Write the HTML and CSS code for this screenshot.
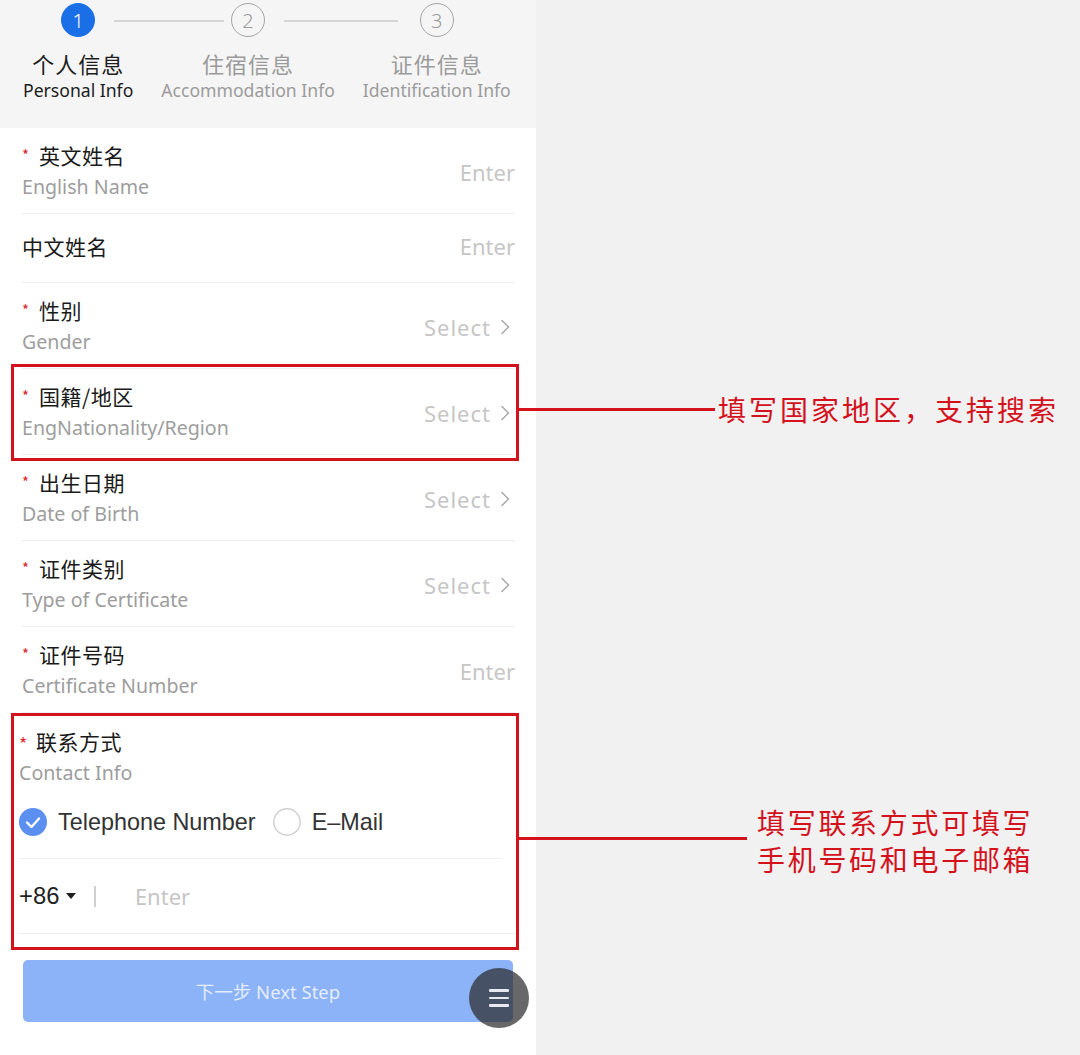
FILE: index.html
```html
<!DOCTYPE html>
<html lang="zh-CN">
<head>
<meta charset="utf-8">
<title>个人信息</title>
<link rel="stylesheet" href="styles.css">
</head>
<body>
<div class="canvas">
  <main class="phone">
    <header class="steps">
      <div class="step active">
        <span class="dot">1</span>
        <span class="step-zh">个人信息</span>
        <span class="step-en">Personal Info</span>
      </div>
      <div class="step">
        <span class="dot">2</span>
        <span class="step-zh">住宿信息</span>
        <span class="step-en">Accommodation Info</span>
      </div>
      <div class="step">
        <span class="dot">3</span>
        <span class="step-zh">证件信息</span>
        <span class="step-en">Identification Info</span>
      </div>
    </header>

    <section class="form">
      <div class="row">
        <div class="label"><div class="zh"><i class="req">*</i>英文姓名</div><div class="en">English Name</div></div>
        <span class="ph">Enter</span>
      </div>
      <div class="row single">
        <div class="label"><div class="zh">中文姓名</div></div>
        <span class="ph">Enter</span>
      </div>
      <div class="row">
        <div class="label"><div class="zh"><i class="req">*</i>性别</div><div class="en">Gender</div></div>
        <span class="ph sel">Select<svg class="chev" viewBox="0 0 10 16" width="10" height="16"><polyline points="2,1.5 8.5,8 2,14.5" /></svg></span>
      </div>
      <div class="row">
        <div class="label"><div class="zh"><i class="req">*</i>国籍/地区</div><div class="en">EngNationality/Region</div></div>
        <span class="ph sel">Select<svg class="chev" viewBox="0 0 10 16" width="10" height="16"><polyline points="2,1.5 8.5,8 2,14.5" /></svg></span>
      </div>
      <div class="row">
        <div class="label"><div class="zh"><i class="req">*</i>出生日期</div><div class="en">Date of Birth</div></div>
        <span class="ph sel">Select<svg class="chev" viewBox="0 0 10 16" width="10" height="16"><polyline points="2,1.5 8.5,8 2,14.5" /></svg></span>
      </div>
      <div class="row">
        <div class="label"><div class="zh"><i class="req">*</i>证件类别</div><div class="en">Type of Certificate</div></div>
        <span class="ph sel">Select<svg class="chev" viewBox="0 0 10 16" width="10" height="16"><polyline points="2,1.5 8.5,8 2,14.5" /></svg></span>
      </div>
      <div class="row">
        <div class="label"><div class="zh"><i class="req">*</i>证件号码</div><div class="en">Certificate Number</div></div>
        <span class="ph">Enter</span>
      </div>

      <div class="contact">
        <div class="zh"><i class="req req-c">*</i>联系方式</div>
        <div class="en">Contact Info</div>
        <div class="radios">
          <span class="radio checked">
            <svg viewBox="0 0 28 28" width="28" height="28"><circle cx="14" cy="14" r="14" fill="#5b8ff0"/><polyline points="8,14.5 12.5,19 20,10.5" fill="none" stroke="#fff" stroke-width="2.4" stroke-linecap="round" stroke-linejoin="round"/></svg>
            Telephone Number
          </span>
          <span class="radio">
            <svg viewBox="0 0 28 28" width="28" height="28"><circle cx="14" cy="14" r="13.2" fill="#fff" stroke="#cfcfcf" stroke-width="1.4"/></svg>
            E–Mail
          </span>
        </div>
        <div class="phone-row">
          <span class="code">+86</span>
          <span class="caret"></span>
          <span class="bar"></span>
          <span class="ph">Enter</span>
        </div>
      </div>
    </section>

    <div class="actions">
      <button class="next">下一步 Next Step</button>
    </div>

    <button class="fab" aria-label="menu"><span></span><span></span><span></span></button>
  </main>

  <div class="note-box box-nat"></div>
  <div class="note-line line-nat"></div>
  <p class="note-text text-nat">填写国家地区，支持搜索</p>

  <div class="note-box box-contact"></div>
  <div class="note-line line-contact"></div>
  <p class="note-text text-contact">填写联系方式可填写<br>手机号码和电子邮箱</p>
</div>
</body>
</html>
```

FILE: styles.css
```css
* { box-sizing: border-box; }

html, body {
  margin: 0;
  padding: 0;
  background: #f1f1f1;
}

body {
  font-family: "Noto Sans", "Noto Sans CJK SC", sans-serif;
}

.canvas {
  position: relative;
  width: 1080px;
  height: 1055px;
  background: #f1f1f1;
}

.phone {
  position: relative;
  width: 536px;
  height: 1055px;
  background: #ffffff;
  display: flex;
  flex-direction: column;
}

/* ---------- stepper ---------- */
.steps {
  height: 128px;
  background: #f5f5f5;
  display: flex;
  gap: 28px;
  padding: 3px 23px 0;
}

.step {
  position: relative;
  display: flex;
  flex-direction: column;
  align-items: center;
  color: #9b9b9b;
}

.step:nth-child(1)::after,
.step:nth-child(2)::after {
  content: "";
  position: absolute;
  top: 17px;
  left: calc(50% + 36px);
  height: 1.5px;
  background: #d6d6d6;
}
.step:nth-child(1)::after { width: 110px; }
.step:nth-child(2)::after { width: 114px; }

.dot {
  width: 34px;
  height: 34px;
  border-radius: 50%;
  border: 1.5px solid #a5a5a5;
  display: flex;
  align-items: center;
  justify-content: center;
  font-family: "Noto Sans", sans-serif;
  font-size: 20px;
  font-weight: 300;
  color: #9b9b9b;
}

.step.active .dot {
  background: #1b6fe6;
  border-color: #1b6fe6;
  color: #ffffff;
}

.step-zh {
  margin-top: 11px;
  font-family: "Noto Sans CJK SC", sans-serif;
  font-size: 22px;
  line-height: 30px;
  letter-spacing: 1px;
}

.step-en {
  font-size: 17.6px;
  line-height: 25px;
  white-space: nowrap;
}

.step.active .step-zh,
.step.active .step-en {
  color: #1c1c1c;
}

/* ---------- form ---------- */
.form {
  padding: 0 21px 0 22px;
}

.row {
  display: flex;
  align-items: center;
  justify-content: space-between;
  padding: 12px 0 9px;
  border-bottom: 1px solid #efefef;
}

.row.single {
  padding: 17px 0 21px;
}

.zh {
  font-family: "Noto Sans CJK SC", sans-serif;
  font-size: 21px;
  line-height: 30px;
  color: #1a1a1a;
  letter-spacing: 0.5px;
}

.row .en {
  line-height: 34px;
}

.req {
  font-style: normal;
  display: inline-block;
  width: 17px;
  font-size: 15px;
  color: #d8232a;
  vertical-align: 3px;
}

.en {
  font-size: 19.6px;
  line-height: 30px;
  color: #9d9d9d;
}

.ph {
  font-size: 22px;
  color: #c6c6c6;
  display: inline-flex;
  align-items: center;
}

.sel {
  margin-right: 5px;
  letter-spacing: 1px;
}

.chev {
  margin-left: 9px;
  fill: none;
  stroke: #a9a9a9;
  stroke-width: 1.5;
  stroke-linecap: round;
  stroke-linejoin: round;
}

/* ---------- contact ---------- */
.contact {
  margin-left: -3px;
  padding-top: 13px;
  border-bottom: 1px solid #eeeeee;
}

.req-c {
  width: 17px;
  font-size: 18px;
  vertical-align: -1px;
  color: #e0302f;
}

.radios {
  display: flex;
  align-items: center;
  gap: 17px;
  margin: 19px 13px 0 0;
  padding: 0 0 21px;
  border-bottom: 1px solid #f0f0f0;
  font-family: "Liberation Sans", sans-serif;
  font-size: 23.4px;
  color: #333333;
}

.radio {
  display: inline-flex;
  align-items: center;
  gap: 11px;
  height: 30px;
}

.phone-row {
  display: flex;
  align-items: center;
  height: 74px;
}

.code {
  font-family: "Liberation Sans", sans-serif;
  font-size: 23.8px;
  color: #1f1f1f;
}

.caret {
  width: 0;
  height: 0;
  margin-left: 7px;
  border-left: 5.5px solid transparent;
  border-right: 5.5px solid transparent;
  border-top: 6px solid #1f1f1f;
}

.bar {
  width: 1.5px;
  height: 21px;
  background: #cfcfcf;
  margin-left: 18px;
}

.phone-row .ph {
  margin-left: 39px;
}

/* ---------- actions ---------- */
.actions {
  padding: 26px 23px 0;
}

.next {
  width: 490px;
  height: 62px;
  border: none;
  border-radius: 5px;
  background: #8cb3f7;
  color: rgba(255, 255, 255, 0.78);
  font-family: "Noto Sans", "Noto Sans CJK SC", sans-serif;
  font-size: 18.5px;
}

.fab {
  position: absolute;
  left: 469px;
  top: 968px;
  width: 60px;
  height: 60px;
  border-radius: 50%;
  border: none;
  padding: 0;
  background: rgba(40, 40, 40, 0.7);
  display: flex;
  flex-direction: column;
  align-items: center;
  justify-content: center;
  gap: 5px;
}

.fab span {
  width: 20px;
  height: 2.5px;
  background: #e6e9f0;
  border-radius: 1px;
}

/* ---------- annotations ---------- */
.note-box {
  position: absolute;
  left: 11px;
  width: 508px;
  border: 3px solid #d3121c;
}

.box-nat { top: 364px; height: 97px; }
.box-contact { top: 713px; height: 237px; }

.note-line {
  position: absolute;
  left: 519px;
  height: 3px;
  background: #d3121c;
}

.line-nat { top: 408px; width: 196px; }
.line-contact { top: 837px; width: 228px; }

.note-text {
  position: absolute;
  margin: 0;
  font-family: "Noto Sans CJK SC", sans-serif;
  font-size: 28px;
  color: #d3121c;
  white-space: nowrap;
}

.text-nat {
  left: 718px;
  top: 390px;
  line-height: 38px;
  letter-spacing: 3px;
}

.text-contact {
  left: 757px;
  top: 804px;
  line-height: 37px;
  letter-spacing: 2.7px;
}
```
